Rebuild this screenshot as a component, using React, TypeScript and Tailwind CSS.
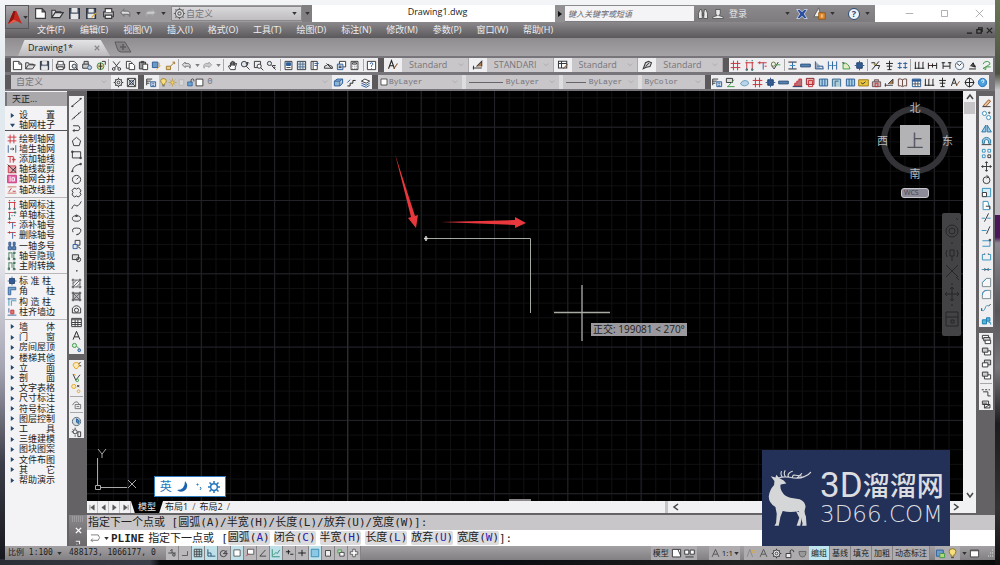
import type { ReactNode } from 'react';
import clsx from 'clsx';

// [path, stroke, fill]
type Shape = [string, string?, string?];

const K = '#3a3a3e';
const R = '#c8323c';
const B = '#2f5f9a';
const C = '#3a93bd';
const G = '#3f9a4a';
const Y = '#e3a92c';

const ring = (x: number, y: number, r: number) =>
  `M${x - r} ${y}a${r} ${r} 0 1 0 ${r * 2} 0a${r} ${r} 0 1 0 ${-r * 2} 0`;

const GLYPHS: Record<string, Shape[]> = {
  new: [['M2 2h8l4 4v8H2zM10 2v4h4', K, '#fff']],
  open: [['M1 13V4h4l1 2h6v2M1 13l4-6h10l-4 6z', K, '#ddd']],
  save: [['M2 2h12v12H2z', '#2b3442', '#4a5668'], ['M5 2h6v4H5zM4 9h8v5H4z', '#e8e8e8', '#e8e8e8']],
  saveas: [['M2 2h11v12H2z', '#2b3442', '#4a5668'], ['M5 3h5v3H5zM4 9h7v4H4z', '#e8e8e8', '#e8e8e8'], ['M8 13l6-6', Y]],
  print: [['M2 6h12v6H2z', K, '#bbb'], ['M4 6V2h8v4M4 10h8v4H4z', K, '#fff']],
  preview: [['M2 2h7l4 4v8H2z', K, '#fff'], [ring(9, 9, 3), K, '#d6e4ee'], ['M11 11l4 4', K]],
  plot: [['M1 6h9v6H1zM3 6V2h6v4', K, '#ccc'], [ring(11, 11, 3), '#4d6b8c', '#b9cfe0']],
  publish: [[ring(8, 9, 5), G, '#dcd58c'], ['M5 9h6M8 4v10M10 2h5v5', K]],
  cut: [['M3 2l8 10M13 2L5 12', K], [ring(4, 13, 2), K], [ring(12, 13, 2), K]],
  copy: [['M2 2h6l2 2v8H2z', K, '#fff'], ['M6 5h5l3 3v6H6z', K, '#fff']],
  paste: [['M2 3h9v10H2zM5 2h3v2H5z', K, '#999'], ['M7 6h7v8H7z', K, '#fff']],
  match: [['M2 3h8v8H2z', B, '#6c9ac4'], ['M8 14l6-6M12 4v5', Y]],
  block: [['M2 9h6v5H2zM8 9l5-5M11 3h3v3', '#a07a34', '#e6cd92']],
  undo: [['M6 3L2 7l4 4V9h5q2 0 2 3q2-6-3-7H6z', '#77777b', '#ddd']],
  redo: [['M10 3l4 4-4 4V9H5q-2 0-2 3q-2-6 3-7h4z', '#a5a5a8', '#ccc']],
  hand: [['M5 14L2 9l2-1 1 2V4h2v4V2h2v6V3h2v5l1-3h2l-2 6v3z', K, '#fff']],
  zoom: [[ring(6, 6, 4), K, '#dde6ee'], ['M9 9l5 5M11 3v5M9 5l2-2 2 2', K]],
  zoomwin: [['M2 2h9v9H2z', K], [ring(9, 9, 3), K, '#fff'], ['M11 11l4 4', K]],
  zoomprev: [[ring(5, 5, 3), K, '#dde6ee'], ['M8 8l6 6M14 8H9', K], [ring(12, 11, 1), K]],
  props: [['M3 2h10v12H3z', K, '#fff'], ['M5 4h6v4H5z', B, B], ['M5 11h6', K]],
  dc: [['M2 2h12v12H2z', K, '#d8e2ea'], ['M2 6h12M2 10h12M6 2v12M10 2v12', '#587490']],
  sheet: [['M3 2h9v12H3zM6 2v12', K, '#fff'], ['M8 5h6M8 8h4', B]],
  markup: [['M2 12q-1-4 3-4 2-4 5 0 4 0 4 4z', K, '#ddd'], ['M5 5l8 8', K]],
  pages: [['M5 2h9v8H5z', K, '#fff'], ['M2 6h8v8H2z', B, '#cfdcea'], ['M4 9h4M4 11h4', K]],
  calc: [['M3 2h10v12H3z', K, '#fff'], ['M5 4h6v2H5zM5 9h1M8 9h1M10 9h1M5 12h1M8 12h1M10 12h1', K]],
  help: [['M2 2h12v12H2z', K, '#fff'], ['M6 6q0-2 2-2t2 2q0 1-2 2v2M8 12v1', B]],
  textstyle: [['M2 13L6 2l4 11M4 9h4', '#222'], ['M9 13l5-7', '#8c5a32']],
  dimstyle: [['M1 12h12M2 9v5M6 10l7-7v7', K, '#ad7a4c']],
  tablestyle: [['M2 3h11v9H2zM2 6h11M6 3v9', K, '#fff'], ['M8 13l6-6', '#8c5a32']],
  mleader: [['M3 13l3-8 4-2 4 2-2 5-5 1z', K, '#ddd'], ['M6 10l5-5', K]],
  gear: [[ring(8, 8, 5), K, '#eee'], [ring(8, 8, 2), K], ['M8 1v2M8 13v2M1 8h2M13 8h2M3 3l1 1M12 12l1 1M13 3l-1 1M3 13l1-1', K]],
  gearbox: [['M2 2h12v12H2z', K, '#ddd'], [ring(8, 8, 3), '#4b6a8a', '#b7c9da'], ['M3 3l10 10M13 3L3 13', K]],
  layers: [['M2 6l5-3 7 3-5 3z', K, '#fff'], ['M2 9l7 3 5-3M2 12l7 3 5-3', B]],
  layerprops: [['M1 3h8M1 6h6M1 9h4M1 3v9', K], ['M7 7h7v7H7zM9 9h3M9 12h3', B, '#dce6f0']],
  bulb: [['M8 1q-5 0-5 4 0 3 3 5v2h4v-2q3-2 3-5 0-4-5-4z', '#8f7420', '#f6df7c'], ['M6 14h4', K]],
  sun: [[ring(8, 8, 3), '#b98b1c', '#f6d865'], ['M8 1v2M8 13v2M1 8h2M13 8h2M3 3l1 1M12 12l1 1M13 3l-1 1M3 13l1-1', '#b98b1c']],
  freeze: [['M4 3h8v10H4z', '#b4b4b6', '#d6d6d8']],
  lock: [['M3 7h8v7H3z', B, '#6ba3cf'], ['M9 7V3q3-3 5 0v3', K]],
  swatch: [['M2 2h12v12H2z', '#222', '#fff']],
  layercube: [['M2 6h8v7H2zM2 6l4-3h8l-4 3M10 13l4-4V3', B, '#8db5d3']],
  // axis, wall and column tools
  hash: [['M5 1v14M11 1v14M1 5h14M1 11h14', R]],
  gate: [['M4 3v11M12 3v11M2 4h12', R], ['M3 13h2v2H3zM11 13h2v2h-2zM3 1h2M11 1h2', '#2f6f6a']],
  gateone: [['M4 3v11M2 4h11', R], ['M3 13h2v2H3zM12 3h2v2h-2zM7 9h2M11 9h2', '#2f6f6a']],
  axisT: [['M1 4h13', R], ['M9 4v10', B], ['M4 2v4M11 9h3', R]],
  axisline: [['M1 4h9M5 4v10M10 4v10', R], ['M8 9h6M11 6v6', R]],
  axischeck: [['M2 8l4 5 6-10', K], [ring(5, 6, 3), '#6a7a3a'], ['M8 7h7', G]],
  axishide: [['M3 2v9M3 3h5v8M11 5v8', '#3e7a55'], ['M2 11h2v3H2zM10 12h3v2h-3zM10 2h3v2h-3z', '#2f5f4a']],
  axiscut: [['M2 3h12v11H2z', R, '#e8a7b0'], ['M1 1l14 13M6 14L14 5', '#222']],
  merge: [['M1 2h14v12H1z', '#c52e7d', '#e36aa5'], ['M5 4v8M8 6h4v5H8z', '#fff']],
  linetype: [['M1 3h14M1 13h14', '#c96a56'], ['M3 11l4-6M9 10h5', R]],
  wallI: [['M2 3h12M2 13h12', '#222'], ['M8 3v10', B], ['M4 8h8', C]],
  wall: [['M1 6h14v4H1z', '#2a4f7c', '#5783b0']],
  wallL: [['M2 2v11h12M5 9h8v4', B, '#9ab']],
  wallaxis: [['M2 2v12M14 2v12', B], ['M5 8h6M9 6l2 2-2 2', K]],
  mirrorwall: [['M2 2v12M8 2v12M14 2v12', B], ['M3 8h4M9 8h4', C]],
  arcfill: [['M3 13V4q8 0 10 9z', G, '#e4edc8'], ['M2 3l3 3', K]],
  column: [['M4 4h8v8H4z', '#23416b', '#335b93'], ['M8 1v14M1 8h14', '#335b93']],
  corner: [['M2 14V2h12v4H6v8z', B, '#74a5c9']],
  cross: [['M3 2v12M7 6h8M7 6v8', C], ['M1 3h14', B]],
  colalign: [['M3 2v7M1 13h14', B], ['M6 5h5v6H6z', R, '#d77a70']],
  figure: [['M3 14L13 2M2 4h5v4M9 8h5l-2 5', '#222'], ['M5 6h4', Y]],
  stick: [['M8 1v13M3 5h10M4 9h8M5 14h6', '#222']],
  dims: [['M2 3v10M7 3v10M13 3v10M1 12h14', '#222'], ['M2 3h1M7 3h1M13 3h1', R]],
  dimline: [['M2 4v9M14 4v9M2 8h12M8 5v6', '#222'], ['M5 8h1', R]],
  dimgap: [['M3 3v10M13 3v10M1 4h5M10 4h5M3 9h10', '#222']],
  clock: [[ring(8, 8, 6), '#4b6a8a', '#f4f7fa'], ['M4 5l4 3 3-3', K]],
  levels: [['M3 13h10M5 9l4-5 3 7M8 9h5', '#222', '#555']],
  loop: [['M3 6q1-4 6-4 5 1 4 4l-6 4h7M3 12l4-2v4z', G]],
  twin: [['M4 3v10M12 3v10M1 5h6M9 5h6M1 11h6M9 11h6', B, B]],
  twincol: [['M3 2h3v5H3zM10 2h3v5h-3zM2 9h5v5H2zM9 9h5v5H9z', '#2a4f86', '#5d8cc0']],
  house: [['M2 7h12v7H2zM5 7V4h6v3', '#6e5a5a', '#c6b3b3'], ['M6 9h4v5H6z', R]],
  stair: [['M2 13h12V3h-4v3H7v3H4v4', R, '#b96f74'], ['M1 14h14', '#1d3a66']],
  window: [['M2 3h12v10H2z', B, '#a9d0e0'], ['M6 3v10M10 3v10', B]],
  door: [['M2 14V3h12v11M6 14V6h5', '#37688c', '#aecbd8']],
  redbox: [['M2 2h11v9H2z', '#8b2631', '#e8b4b0'], ['M5 5h6v9H5z', R]],
  note: [['M1 4h14v9H1z', '#9b7a1c', '#eac53d'], ['M4 8l3 2 4-3', K]],
  table: [['M2 3h12v11H2z', B, '#fff'], ['M2 4h12v2H2z', B, B], ['M2 10h12M6 6v8M10 6v8', '#555']],
  plaintable: [['M1 2h14v12H1z', K, '#fff'], ['M1 4h14M1 8h14M1 11h14M6 4v10M10 4v10', K]],
  book: [['M2 3q3-1 6 1 3-2 6-1v10q-3-1-6 1-3-2-6-1zM8 4v9', '#6b4a42', '#eee']],
  sketch: [['M2 2h9v6H2z', K, '#dcdcdc'], ['M5 13L13 4M3 14h11', G]],
  cloud: [['M2 10q2-5 7-5t5 5q-6 6-12 0z', '#6f9ec0', '#b8d4e6']],
  steps: [['M2 13h4v-4h4V5h4', '#222'], ['M2 8l4-4', B]],
  north: [['M8 1v14M1 8h14', '#222'], [ring(8, 8, 6), '#222']],
  bluehelp: [[ring(8, 8, 6), '#2a73b8', '#4aa0dc'], ['M6 6q4-4 4 0L8 9', '#fff']],
  // draw tools
  line: [['M2 13L14 3', K], ['M1 13h2v1H1zM13 2h2v1h-2z', K]],
  xline: [['M1 14L15 2M5 12v-2M11 6V4', K]],
  pline: [['M3 4h8q4 4 0 7H3M3 11l2-2M3 11l2 2', K]],
  polygon: [['M8 2l6 5-2 7H4L2 7z', K]],
  rect: [['M2 4h12v9H2z', K], ['M1 3h2v2H1zM13 12h2v2h-2z', K]],
  arc: [['M2 14q0-9 12-11', K], ['M1 13h2v1H1zM13 2h2v2h-2z', K]],
  circle: [[ring(8, 8, 6), K], ['M8 8l3-3', K]],
  revcloud: [['M8 3q3-3 5 0 3 3 0 5 3 3 0 5-3 3-5 0-3 3-5 0-3-3 0-5-3-3 0-5 3-3 5 0z', K]],
  spline: [['M1 13q3-8 6-5t8-6', K]],
  ellipse: [['M2 8q0-4 6-4t6 4-6 4-6-4z', K], ['M7 3h2v2H7z', K]],
  earc: [['M3 9q-3-6 5-6t6 5-6 5l2-2', K]],
  insert: [['M6 2h7v7H6z', K], ['M3 8h6v6H3z', B, '#dce6ee'], ['M10 11l4 3', K]],
  makeblock: [['M2 4h9v7H2z', K, '#ddd'], [ring(11, 11, 3), K]],
  point: [['M8 8h1v1H8z', K]],
  hatch: [['M3 3h10v10H3zM3 8l5-5M3 13L13 3M8 13l5-5', '#66666a'], ['M1 3h2V1M13 1v2h2M1 13h2v2M15 13h-2v2', K]],
  gradient: [['M3 3h10v10H3z', K, '#b9b9bd'], ['M3 3l10 10M13 3L3 13', '#66666a'], ['M1 3h2V1M13 1v2h2M1 13h2v2M15 13h-2v2', K]],
  region: [['M2 13V6q6-7 12 0v7z', K], [ring(8, 9, 3), K]],
  mtext: [['M3 14L8 2l5 12M5 10h6', '#222']],
  addsel: [[ring(5, 5, 3), G, '#d6ecd6'], ['M8 6l4 4', G], [ring(12, 12, 2), B, '#a8c4e0']],
  bulbA: [['M8 2q-5 0-5 4l3 5h3l3-5q0-4-4-4z', Y, '#fbeab8'], ['M11 4l3-2M12 7h3', K]],
  bulbB: [['M3 3l4 9 6-8', K], [ring(9, 12, 2), G], ['M4 3l3 2', Y]],
  bulbC: [[ring(4, 5, 3), Y, '#fbeab8'], [ring(11, 12, 2), Y], ['M9 3l3 3M12 3L9 6', K]],
  isolate: [['M2 9q3-6 7-5l4 5M6 8h8v6H6zM8 11h4', '#77777b']],
  orb: [[ring(8, 8, 6), '#5d6c76', '#cfdce2'], ['M8 4l4 3-1 4-3-2z', B, C]],
  sunprops: [[ring(6, 7, 3), K], ['M6 1v2M1 7h2M2 3l1 1M10 7h4v7h-4zM6 12v2', K]],
  // modify tools
  erase: [['M3 13l8-9 3 2-7 8z', '#9a5d34', '#e6c29a'], ['M2 14h12', K]],
  copyobj: [[ring(5, 5, 3), C, '#fff'], [ring(11, 11, 3), C, '#fff'], [ring(12, 4, 1), K]],
  mirror: [['M7 3v10H1zM9 3v10h6z', '#2f7aa5', '#9bd0ea']],
  offset: [['M2 12h3V8q3-3 6 0v4h3V7q-6-7-12 0z', '#2f7aa5', '#9bd0ea'], ['M1 14h14', K]],
  array: [['M2 2h4v4H2zM10 2h4v4h-4zM2 10h4v4H2z', C, '#fff'], ['M10 10h4v4h-4z', K]],
  move: [['M8 1v14M1 8h14M6 3l2-2 2 2M6 13l2 2 2-2M3 6L1 8l2 2M13 6l2 2-2 2', K]],
  rotate: [[ring(8, 9, 5), K], ['M8 2l3 2-3 2', K]],
  scale: [['M2 2h12v12H2z', C, '#d3ecf6'], ['M2 8h6v6H2z', K, '#fff']],
  stretch: [['M3 2h7l3 12H3z', C, '#fff'], ['M7 9h6v4', K]],
  trim: [['M1 9h5M9 9h5', C], ['M5 14L11 2', K]],
  extend: [['M1 8h7', C], ['M8 13l5-11', K]],
  breakpt: [['M2 4h11v8H2', C], ['M12 2h2v2h-2z', K]],
  breakgap: [['M6 5H2v8h12V5h-4', C], ['M5 4h1M10 4h1', K]],
  join: [['M1 8h14', C], ['M5 6l2 2-2 2M11 6L9 8l2 2', K]],
  chamfer: [['M2 14V8l6-6h6v12z', '#7b8a92', '#f7f7f7'], ['M2 8l6-6', C]],
  fillet: [['M2 14V9q0-7 7-7h5v12z', '#7b8a92', '#f7f7f7'], ['M2 9q0-7 7-7', C]],
  blend: [['M1 11q3 4 5-2t5-3', C], ['M11 6l3-3M1 13V9', K]],
  explode: [['M2 7h6v6H2zM8 4h5v5H8z', '#1f7fb0', '#58b5da'], ['M11 11h3v3', C]],
  order1: [['M2 2h9v5H2z', K, '#fff'], ['M4 5h9v5H4z', K, '#ccc'], ['M6 9h8v5H6z', K, '#fff']],
  order2: [['M5 7h9v6H5z', K, '#fff'], ['M2 3h8v6H2z', K, '#ccc']],
  order3: [['M5 3h9v7H5z', K, '#ccc'], ['M2 7h8v6H2z', K, '#fff']],
  ordertxt: [['M1 4h3M6 4h3M11 4h2M3 7h7v6M10 13h4', K]],
  orderhatch: [['M2 3h9v5H2zM5 8h8v5H5zM5 13l8-5M3 6h6', K]],
  // status toggles
  infer: [['M8 2v6M2 8h12M5 5l3-3', K], [ring(11, 11, 2), K]],
  snap: [['M3 12h9V5', '#555']],
  grid: [['M2 2h12v12H2zM2 6h12M2 10h12M6 2v12M10 2v12', '#444']],
  ortho: [['M3 2v11h12M3 8h5v5', '#1d4f72']],
  polar: [[ring(7, 9, 5), K], ['M7 9l6-5M7 9h7', K]],
  osnap: [['M3 3h10v10H3z', '#555', '#fff']],
  osnap3: [['M4 2h10v8H4z', '#555', '#fff'], ['M2 13l4-4', R]],
  otrack: [['M3 13L12 3M3 13h10', K]],
  ducs: [['M2 2v12h12M4 11l4-4 2 2 4-6', '#2a8c6a']],
  dyn: [['M3 6h7M7 3v7M10 10h5', '#111']],
  lwt: [['M2 8h12M8 3v10', '#111']],
  tpy: [['M2 2h12v12H2z', '#3488b5', '#8cc8e4']],
  qp: [['M4 4h8v9H4z', K, '#eee']],
  sc: [['M3 3h6v5H3z', G, '#c8e0c0'], ['M6 7h7v6H6z', K, '#fff']],
  plus: [['M6 2h4v4h4v4h-4v4H6v-4H2V6h4z', '#555', '#fff']],
  paper: [['M2 2h12v11H2z', K, '#fff'], ['M10 2l4 9', K]],
  views: [['M1 3h6v6H1zM9 3h6v6H9zM2 13h12', K, '#fff']],
  person: [['M8 2L3 13M8 2l5 11M5 9h6', '#555', '#eee']],
  annoY: [['M7 2L3 13M7 2l4 11', '#888', '#fff'], ['M10 3l4 4M14 3l-4 4', Y]],
  unlock: [['M3 8h7v6H3z', K, '#eee'], ['M9 8V4q2-3 5 0v2', K]],
  bowl: [['M3 5h10q0 8-5 8T3 5z', '#666', '#999']],
  disk: [['M2 3h10v9H2z', '#2d5f9a', '#6d9ccb'], ['M7 8h7v6H7z', G, '#b6d67c']],
  screen: [['M2 3h12v10H2z', '#444', '#fff'], ['M2 4h12', '#444']],
};

function Glyph({ name, className = 'size-[11px]' }: { name: string; className?: string }) {
  return (
    <svg viewBox="0 0 16 16" className={clsx('shrink-0', className)} aria-hidden="true">
      {GLYPHS[name].map(([d, stroke, fill], i) => (
        <path key={i} d={d} stroke={stroke} fill={fill ?? 'none'} strokeWidth="1.4" />
      ))}
    </svg>
  );
}

const Caret = ({ className = '' }: { className?: string }) => (
  <svg viewBox="0 0 6 4" className={clsx('h-[3px] w-[5px] shrink-0', className)} aria-hidden="true">
    <path d="M0 0h6L3 4z" fill="#333" />
  </svg>
);

// '|' draws a divider, 'v' a narrow drop-down arrow
function IconRow({ items, className }: { items: string; className?: string }) {
  return (
    <div role="toolbar" className={clsx('flex items-center bg-[#efeef0]', className)}>
      {items.split(' ').map((n, i) => {
        if (n === '|') return <span key={i} className="mx-px h-3 w-px bg-[#a9a7aa]" />;
        if (n === 'v')
          return (
            <button key={i} aria-label="更多" className="flex w-2 justify-center">
              <Caret className="opacity-60" />
            </button>
          );
        return (
          <button key={i} aria-label={n} className="flex min-w-0 flex-1 justify-center">
            <Glyph name={n} />
          </button>
        );
      })}
    </div>
  );
}

function IconColumn({ items, className }: { items: string; className?: string }) {
  return (
    <div role="toolbar" className={clsx('flex basis-0 flex-col bg-[#efeef0]', className)}>
      {items.split(' ').map((n, i) =>
        n === '|' ? (
          <span key={i} className="mx-px my-[2px] h-px bg-[#a9a7aa]" />
        ) : (
          <button key={i} aria-label={n} className="flex min-h-0 flex-1 items-center justify-center">
            <Glyph name={n} />
          </button>
        ),
      )}
    </div>
  );
}

const Grip = () => <span className="w-[6px] shrink-0 self-stretch bg-[#5b595c]" />;

function Combo({ label, value, className, selectClass, children }: {
  label: string;
  value: string;
  className?: string;
  selectClass?: string;
  children?: ReactNode;
}) {
  return (
    <label className={clsx('flex min-w-0 basis-0 items-center self-stretch bg-[#c8c6c9] text-[#77757a]', className)}>
      {children}
      <select aria-label={label} className={clsx('min-w-0 flex-1 appearance-none bg-transparent leading-3 outline-none', selectClass)}>
        <option>{value}</option>
      </select>
      <svg viewBox="0 0 8 8" className="mx-1 size-[6px] shrink-0" aria-hidden="true">
        <path d="M1 2l3 3 3-3" fill="none" stroke="#a5a3a6" />
      </svg>
    </label>
  );
}

const MENUS = ['文件(F)', '编辑(E)', '视图(V)', '插入(I)', '格式(O)', '工具(T)', '绘图(D)', '标注(N)', '修改(M)', '参数(P)', '窗口(W)', '帮助(H)'];

function TitleBar() {
  return (
    <header className="relative flex h-[17px] shrink-0 bg-white pl-[23px]">
      <button
        aria-label="应用程序菜单"
        className="absolute top-0 left-0 z-10 flex h-6 w-6 items-center justify-center gap-px border border-[#59575a] bg-gradient-to-b from-[#a9a7aa] to-[#77757a]"
      >
        <svg viewBox="0 0 16 16" className="size-[15px]" aria-hidden="true">
          <path d="M7 1h3l6 14-5-3-10 3z" fill="#c2281f" />
          <path d="M7 1l-6 14 6-5 2-9z" fill="#8c140f" />
          <path d="M7 10l4 2-10 3z" fill="#e85b4c" />
        </svg>
        <Caret />
      </button>
      <div className="flex w-[284px] items-center bg-[#9c9a9d] pl-1">
        {['new', 'open', 'save', 'saveas', 'print', 'undo', 'v', 'redo', 'v'].map((n, i) =>
          n === 'v' ? (
            <button key={i} aria-label="更多" className="flex w-2 justify-center"><Caret /></button>
          ) : (
            <button key={i} aria-label={n} className="flex w-[17px] justify-center"><Glyph name={n} className="size-[13px]" /></button>
          ),
        )}
        <label className="ml-1 flex h-[15px] flex-1 items-center border border-[#8a888b] bg-gradient-to-b from-[#d9d8da] to-[#bfbdc0] px-px">
          <Glyph name="gear" className="size-[13px] opacity-70" />
          <select aria-label="工作空间" className="min-w-0 flex-1 appearance-none bg-transparent text-[9px] leading-3 text-[#77757a] outline-none">
            <option>自定义</option>
          </select>
          <Caret className="mr-[3px]" />
        </label>
        <button aria-label="自定义快速访问" className="flex h-full w-[10px] items-center justify-center bg-[#807e81]"><Caret /></button>
      </div>
      <h1 className="flex-1 pl-2 text-center text-[9px] leading-[14px] text-[#222]">Drawing1.dwg</h1>
      <div className="flex w-[320px] items-center bg-gradient-to-b from-[#8c8a8d] to-[#7d7b7e]">
        <button aria-label="展开" className="flex h-full w-[10px] items-center justify-center bg-[#929093]">
          <svg viewBox="0 0 4 6" className="h-[6px] w-1"><path d="M0 0l4 3-4 3z" fill="#111" /></svg>
        </button>
        <input
          aria-label="搜索"
          placeholder="键入关键字或短语"
          className="h-[15px] w-[129px] bg-[#f4f3f5] px-[3px] text-[8px] italic outline-none placeholder:text-[#66646a]"
        />
        <button aria-label="查找" className="ml-[3px] w-3">
          <svg viewBox="0 0 16 16" className="size-3" fill="#e9e9e9" stroke="#444"><path d="M2 14V7l2-5h2l1 5v7zM9 14V7l1-5h2l2 5v7zM7 7h2v3H7z" /></svg>
        </button>
        <button className="ml-[3px] flex items-center gap-[5px] text-[9px] leading-3 text-[#e8e7e9]">
          <svg viewBox="0 0 16 16" className="size-3" fill="#e9e9e9" stroke="#444"><path d="M5 2h6v6l-2 2 6 2v2H1v-2l6-2-2-2z" /></svg>
          登录
        </button>
        <span className="flex-1" />
        <Caret />
        <button aria-label="Exchange" className="ml-[6px]">
          <svg viewBox="0 0 16 16" className="size-3"><path d="M1 2h4l3 3 3-3h4l-4 6 4 6h-4l-3-3-3 3H1l4-6z" fill="#2c4f9e" stroke="#dfe4f0" /></svg>
        </button>
        <button aria-label="A360" className="ml-[5px] flex items-center gap-1">
          <svg viewBox="0 0 16 16" className="size-[13px]"><path d="M7 1L1 12h9z" fill="#eee" stroke="#555" /><path d="M7 7h8v8H7z" fill="#e08a2c" stroke="#8d5213" /><path d="M11 9v4" stroke="#fff" /></svg>
          <Caret />
        </button>
        <button aria-label="帮助" className="ml-[13px] flex size-3 items-center justify-center rounded-full border border-[#2b4a73] bg-[#eef3f8] text-[9px] leading-none font-bold text-[#2b4a73]">?</button>
        <Caret className="mx-[5px]" />
      </div>
      <div className="flex w-[120px] items-center justify-between pr-[11px] pl-[30px]">
        {['M1 6h10', 'M2 2h8v8H2z', 'M1 1l10 10M11 1L1 11'].map((d) => (
          <button key={d} aria-label={d === 'M1 6h10' ? '最小化' : d.includes('z') ? '最大化' : '关闭'}>
            <svg viewBox="0 0 12 12" className="size-[9px]"><path d={d} fill="none" stroke="#99979a" /></svg>
          </button>
        ))}
      </div>
    </header>
  );
}

function Toolbars() {
  return (
    <div className="flex shrink-0 flex-col gap-[3px] bg-[#77757a] pt-[2px] pb-[2px]">
      <div className="flex h-[14px] items-center pr-[2px] text-[9px]">
        <Grip />
        <IconRow
          className="h-full grow-[367] basis-0"
          items="new open save | print preview plot publish | cut copy paste match block | undo v redo v | hand zoom zoomwin zoomprev | props dc sheet markup pages calc | help"
        />
        <Grip />
        <div className="flex h-full grow-[339] basis-0 items-center bg-[#efeef0]">
          {[
            ['textstyle', '文字样式', 'Standard'],
            ['dimstyle', '标注样式', 'STANDARI'],
            ['tablestyle', '表格样式', 'Standard'],
            ['mleader', '多重引线样式', 'Standard'],
          ].map(([icon, label, value]) => (
            <div key={label} className="flex min-w-0 flex-1 items-center self-stretch border-r border-[#a9a7aa]">
              <button aria-label={label} className="flex w-[18px] shrink-0 justify-center"><Glyph name={icon} className="size-3" /></button>
              <Combo label={label} value={value} className="grow" selectClass="pl-[7px]" />
            </div>
          ))}
        </div>
        <Grip />
        <IconRow
          className="h-full grow-[264] basis-0"
          items="hash gate axisT axischeck | wallI wall wallL mirrorwall arcfill column | figure stick twin | dims dimline dimgap clock levels loop"
        />
      </div>
      <div className="flex h-[14px] items-center pr-[6px] text-[8px]">
        <Grip />
        <Combo label="工作空间" value="自定义" className="grow-[100]" selectClass="pl-[5px] text-[9px]" />
        <IconRow className="h-full w-[27px]" items="gear gearbox" />
        <Grip />
        <IconRow className="h-full w-[15px]" items="layerprops" />
        <Combo label="图层" value="0" className="grow-[172] font-[Liberation_Mono] text-[9px]" selectClass="pl-[3px]">
          <span className="flex">
            {['bulb', 'sun', 'freeze', 'lock', 'swatch'].map((n) => (
              <Glyph key={n} name={n} className="size-[9px]" />
            ))}
          </span>
        </Combo>
        <IconRow className="h-full w-10" items="layercube steps layers" />
        <Grip />
        <div className="flex h-full grow-[326] basis-0 gap-1 bg-[#dddcde] font-[Liberation_Mono]">
          <Combo label="颜色" value="ByLayer" className="grow-[83]" selectClass="pl-px">
            <Glyph name="swatch" className="ml-[2px] size-2" />
          </Combo>
          <Combo label="线型" value="ByLayer" className="grow-[92]" selectClass="pl-[3px]">
            <span className="ml-[3px] h-px w-[34px] bg-[#66646a]" />
          </Combo>
          <Combo label="线宽" value="ByLayer" className="grow-[75]" selectClass="pl-[3px]">
            <span className="ml-[3px] h-px w-5 bg-[#66646a]" />
          </Combo>
          <Combo label="打印样式" value="ByColor" className="grow-[62]" selectClass="pl-[2px]" />
        </div>
        <Grip />
        <IconRow
          className="h-full grow-[277] basis-0"
          items="layerprops sketch cloud hash column wall stair redbox window door window note house dimstyle book table dims stick textstyle north bluehelp"
        />
      </div>
    </div>
  );
}

const SIDEBAR: [string, string][][] = [
  [['right', '设置'], ['down', '轴网柱子']],
  [['hash', '绘制轴网'], ['wallaxis', '墙生轴网'], ['axisline', '添加轴线'], ['axiscut', '轴线裁剪'], ['merge', '轴网合并'], ['linetype', '轴改线型']],
  [['gate', '轴网标注'], ['gateone', '单轴标注'], ['axisT', '添补轴号'], ['axisT', '删除轴号'], ['twincol', '一轴多号'], ['axishide', '轴号隐现'], ['axishide', '主附转换']],
  [['column', '标准柱'], ['corner', '角柱'], ['cross', '构造柱'], ['colalign', '柱齐墙边']],
  ['墙体', '门窗', '房间屋顶', '楼梯其他', '立面', '剖面', '文字表格', '尺寸标注', '符号标注', '图层控制', '工具', '三维建模', '图块图案', '文件布图', '其它', '帮助演示'].map(
    (t): [string, string] => ['right', t],
  ),
];

function Sidebar() {
  return (
    <aside className="flex w-[62px] shrink-0 flex-col bg-[#f3f2f4]">
      <h2 className="mt-px h-[14px] shrink-0 border-l-2 border-[#77757a] bg-[#aaa8ab] pl-[5px] text-[9px] leading-[14px] text-[#222]">天正...</h2>
      <nav className="flex flex-1 flex-col pt-1 pb-[61px] font-[Liberation_Sans,Noto_Sans_CJK_SC,sans-serif]">
        {SIDEBAR.map((group, gi) => (
          <div key={gi} className="contents">
            {gi > 0 && <span className={clsx('h-px shrink-0', gi === 1 ? 'mb-[2px] bg-[#55535a]' : 'my-[2px]', gi > 1 && 'bg-[#b9b7ba]')} />}
            {group.map(([icon, text]) => (
              <button key={text} className="flex min-h-0 flex-1 items-center text-left text-[9px] leading-[10px] text-[#1c1c20]">
                <span className="flex w-[14px] justify-center">
                  {icon === 'right' || icon === 'down' ? (
                    <svg viewBox="0 0 6 6" className="size-[5px]"><path d={icon === 'right' ? 'M1 0l4 3-4 3z' : 'M0 1h6L3 5z'} fill="#23496e" /></svg>
                  ) : (
                    <Glyph name={icon} className="size-[10px]" />
                  )}
                </span>
                <span className={clsx('flex justify-between', text.length === 3 ? 'w-8' : 'w-9')}>
                  {text.length === 4 ? text : text.split('').map((ch) => <span key={ch}>{ch}</span>)}
                </span>
              </button>
            ))}
          </div>
        ))}
      </nav>
    </aside>
  );
}

function Drawing() {
  return (
    <div className="relative min-h-0 min-w-0 flex-1 overflow-hidden bg-black">
      <svg className="absolute inset-0 size-full" aria-label="绘图区">
        <defs>
          <pattern id="minor" x="40.5" y="35.7" width="14.66" height="14.66" patternUnits="userSpaceOnUse">
            <path d="M0 .5h15M.5 0v15" stroke="#101013" />
          </pattern>
          <pattern id="major" x="40.5" y="35.7" width="73.3" height="73.3" patternUnits="userSpaceOnUse">
            <path d="M0 .5h74M.5 0v74" stroke="#222228" />
          </pattern>
        </defs>
        <rect width="100%" height="100%" fill="url(#minor)" />
        <rect width="100%" height="100%" fill="url(#major)" />
        <path d="M260.5 0v410" stroke="#2c2c31" />
        {/* annotation arrows */}
        <path d="M308 63l16 63-3 1 8 10 2-13-3 1z" fill="#e8383d" />
        <path d="M354 131l74-2v-3l11 6-11 5v-3z" fill="#e8383d" />
        {/* polyline in progress and the crosshair */}
        <path d="M338 147.500h105.500V222" fill="none" stroke="#a4aaa2" />
        <path d="M337 147.500h4M339 145v5" stroke="#d5d8d2" strokeWidth="1.500" />
        <path d="M467 221.500h56M495 194v56" stroke="#a9aba5" strokeWidth="1.300" />
      </svg>
      <div className="absolute top-[232px] left-[504px] bg-[#9b999e] px-[2px] text-[10px] leading-[13px] text-[#222]">正交: 199081 &lt; 270°</div>

      {/* UCS axes */}
      <svg viewBox="0 0 50 50" className="absolute bottom-1 left-[4px] size-[50px]" fill="none" stroke="#a9a9a9">
        <path d="M6.500 11v27M9 40.500h27M4.500 38.500h5v4h-5zM7 2l4 5 4-5M11 7v4M37 33l8 8M45 33l-8 8" />
      </svg>
      <div className="absolute bottom-1 left-[67px] flex h-[21px] w-[72px] items-center justify-around border border-[#2f7cc0] bg-white px-[2px] text-[12px] leading-none text-[#2476bd]">
        <span>英</span>
        <svg viewBox="0 0 12 12" className="size-3"><path d="M8 0q5 6-1 10-4 2-7-1 8 0 8-9z" fill="#1c62b0" /></svg>
        <svg viewBox="0 0 8 8" className="size-[8px]"><path d="M2 1h1v1H2zM5 4q2 1 0 3" stroke="#2476bd" fill="none" /></svg>
        <svg viewBox="0 0 16 16" className="size-3" fill="none" stroke="#2476bd" strokeWidth="2"><circle cx="8" cy="8" r="4.500" /><path d="M8 0v3M8 13v3M0 8h3M13 8h3M2 2l3 3M11 11l3 3M14 2l-3 3M2 14l3-3" /></svg>
      </div>
      <span className="absolute bottom-0 left-1/2 h-[2px] w-[22px] -translate-x-4 bg-[#8a888b]" />

      {/* view cube */}
      <div className="absolute top-[9px] right-[8px] grid h-[80px] w-[80px] place-items-center text-[11px] leading-none text-[#b9b9bb]">
        <span className="absolute size-[68px] rounded-full border-[6px] border-[#343438]" />
        <button className="relative flex size-[30px] items-center justify-center bg-[#b3b3b5] text-[17px] text-[#55555a]">上</button>
        <span className="absolute top-[2px]">北</span>
        <span className="absolute bottom-px">南</span>
        <span className="absolute left-[2px]">西</span>
        <span className="absolute right-[2px]">东</span>
      </div>
      <button className="absolute top-[97px] right-[34px] h-[10px] w-7 rounded-[3px] border border-[#c9c8cf] bg-[#8d8b97] pl-[2px] text-left text-[7px] leading-[8px] text-[#44424c]">WCS</button>
      <div className="absolute top-[122px] right-[2px] flex h-[123px] w-[19px] flex-col items-center justify-around rounded-[2px] bg-[#434345] text-[#242426]">
        <svg viewBox="0 0 18 120" className="h-[120px] w-[18px]" fill="none" stroke="#262628">
          <circle cx="9" cy="16" r="6" /><circle cx="9" cy="16" r="3" /><path d="M8 28h2M8 69h2M8 90h2" />
          <path d="M4 35q-2 4 0 7M14 35q2 4 0 7M7 35h4v6H7zM9 41v5M3 50l12 12M15 50L3 62M13 62l3 3" />
          <path d="M9 72v14M2 79h14M7 74l2-2 2 2M7 84l2 2 2-2M4 77l-2 2 2 2M14 77l2 2-2 2M3 97h12v14H3zM3 102h12M8 105h3v3H8zM13 3l2 2" />
        </svg>
      </div>
    </div>
  );
}

function Chevron({ d }: { d: string }) {
  return (
    <svg viewBox="0 0 8 8" className="size-2"><path d={d} fill="none" stroke="#444" strokeWidth="1.500" /></svg>
  );
}

function Workspace() {
  return (
    <div className="flex min-h-0 flex-1">
      <div className="flex min-w-0 flex-1 flex-col">
        <div className="flex min-h-0 flex-1">
          <Drawing />
          <div className="flex w-[13px] shrink-0 flex-col items-center justify-between bg-[#f1f0f2] py-[2px]">
            <button aria-label="向上滚动"><Chevron d="M1 6l3-4 3 4" /></button>
            <span className="mt-px mb-auto h-3 w-[11px] bg-[#c6c4c7]" />
            <button aria-label="向下滚动"><Chevron d="M1 2l3 4 3-4" /></button>
          </div>
        </div>
        <div className="flex h-3 shrink-0 items-center bg-[#f1f0f2] text-[9px] leading-3 text-[#222]">
          {['M6 1v6L2 4zM1 1v6', 'M6 1v6L2 4z', 'M2 1v6l4-3z', 'M2 1v6l4-3zM7 1v6'].map((d, i) => (
            <button key={d} aria-label={['首个', '上一个', '下一个', '末个'][i]} className="flex h-full w-[11px] items-center justify-center border-r border-[#c4c2c5]">
              <svg viewBox="0 0 8 8" className="size-[7px]"><path d={d} fill="#555" stroke="#555" strokeWidth=".6" /></svg>
            </button>
          ))}
          <div role="tablist" className="flex h-full">
            <button role="tab" className="bg-black px-[7px] text-[#e8e8e8] [clip-path:polygon(0_0,100%_0,88%_100%,12%_100%)]">模型</button>
            <button role="tab" className="pr-1 pl-[2px]">布局1</button>
            <span className="text-[#666]">/</span>
            <button role="tab" className="px-1">布局2</button>
            <span className="text-[#666]">/</span>
          </div>
          <span className="flex-1" />
          <div className="flex h-full w-[311px] items-center justify-between border-l-[3px] border-[#c6c4c7] pr-4 pl-1">
            <button aria-label="向左滚动"><Chevron d="M6 1L2 4l4 3" /></button>
            <button aria-label="向右滚动"><Chevron d="M2 1l4 3-4 3" /></button>
          </div>
        </div>
      </div>
      <div className="flex w-[19px] shrink-0 flex-col bg-[#646265] pt-[5px] pr-[2px] pb-[103px] pl-[3px]">
        <IconColumn
          className="grow-[18]"
          items="erase copyobj mirror offset array move rotate scale stretch trim extend breakpt breakgap join chamfer fillet blend explode"
        />
        <span className="h-[6px] shrink-0" />
        <IconColumn className="grow-[6]" items="order1 order2 order3 order2 | ordertxt orderhatch" />
      </div>
    </div>
  );
}

const OPTIONS = [['圆弧', 'A'], ['闭合', 'C'], ['半宽', 'H'], ['长度', 'L'], ['放弃', 'U'], ['宽度', 'W']];

function CommandLine() {
  return (
    <section aria-label="命令行" className="flex shrink-0 border-t-2 border-[#646265] text-[11px] whitespace-nowrap">
      <div className="flex w-[18px] shrink-0 flex-col items-center justify-between bg-gradient-to-b from-[#8a888b] to-[#6a686b] py-px text-white">
        <svg viewBox="0 0 12 6" className="h-[6px] w-3"><path d="M0 1h12M0 3h12M0 5h12" stroke="#b3b1b4" strokeDasharray="1 1" /></svg>
        <button aria-label="关闭命令行"><svg viewBox="0 0 8 8" className="size-[7px]"><path d="M1 1l6 6M7 1L1 7" stroke="#fff" strokeWidth="1.600" /></svg></button>
        <button aria-label="选项"><svg viewBox="0 0 8 8" className="size-[6px]"><path d="M1 3h5v4M2 7h1" fill="none" stroke="#eee" strokeWidth="1.500" /></svg></button>
      </div>
      <div className="min-w-0 flex-1 font-[DejaVu_Sans_Mono,Noto_Sans_CJK_SC,monospace] leading-[15px] text-[#222]">
        <p className="bg-[#c8c6c9] pl-px">指定下一个点或 [圆弧(A)/半宽(H)/长度(L)/放弃(U)/宽度(W)]:</p>
        <div className="flex h-4 items-center bg-white pl-[2px]">
          <svg viewBox="0 0 14 10" className="h-[9px] w-[13px]"><path d="M2 1h8q3 3 0 6H2M2 7l2-2M2 7l2 2" fill="none" stroke="#777" /></svg>
          <Caret className="mx-[2px]" />
          <b>PLINE</b>
          <span className="ml-1">指定下一点或</span>
          <span className="ml-[7px]">[</span>
          {OPTIONS.map(([text, key], i) => (
            <button key={key} className={clsx('rounded-[2px] bg-[#dcdbdd] leading-[14px]', i > 0 && 'ml-1')}>
              {text}(<span className="text-[#2a22b8]">{key}</span>)
            </button>
          ))}
          <span>]:</span>
        </div>
      </div>
    </section>
  );
}

const TOGGLES = ['infer', 'snap', 'grid', 'ortho', 'polar', 'osnap', 'osnap3', 'otrack', 'ducs', 'dyn', 'lwt', 'tpy', 'qp', 'sc', 'plus'];
const ACTIVE = ['grid', 'ortho', 'osnap', 'ducs', 'tpy'];

function StatusBar() {
  return (
    <footer className="flex h-[14px] shrink-0 items-center bg-gradient-to-b from-[#a3a1a4] to-[#828083] pl-[3px] text-[8px] leading-3 whitespace-nowrap text-[#1d1d20]">
      <button className="flex w-[61px] items-center gap-1">
        <span className="font-[DejaVu_Sans_Mono,Noto_Sans_CJK_SC,monospace]">比例 1:100</span>
        <Caret />
      </button>
      <span className="w-[97px] font-[DejaVu_Sans_Mono]">488173, 1066177, 0</span>
      <div className="flex h-full">
        {TOGGLES.map((n) => (
          <button key={n} aria-label={n} className={clsx('flex h-full w-[13px] items-center justify-center border-r border-[#858386]', ACTIVE.includes(n) ? 'bg-[#bfdfe9]' : 'bg-[#bab8bb]')}>
            <Glyph name={n} className="size-[10px]" />
          </button>
        ))}
      </div>
      <span className="flex-1" />
      <div className="flex h-full items-center bg-[#aeacaf]">
        <button className="w-5">模型</button>
        <button aria-label="图纸" className="w-[13px]"><Glyph name="paper" /></button>
        <button aria-label="快速查看" className="w-[13px]"><Glyph name="views" /></button>
      </div>
      <button className="ml-3 flex h-full items-center gap-px bg-[#aeacaf] px-px">
        <Glyph name="person" />1:1<Caret />
      </button>
      <div className="ml-1 flex h-full items-center bg-[#aeacaf]">
        {['annoY', 'person', 'gear', 'unlock', 'bowl'].map((n) => (
          <button key={n} aria-label={n} className="flex w-[13px] justify-center"><Glyph name={n} /></button>
        ))}
        {['编组', '基线', '填充', '加粗', '动态标注'].map((t, i) => (
          <button key={t} className={clsx('h-full border-r border-[#858386] px-[2px]', i === 0 && 'bg-[#bfe6f0]')}>{t}</button>
        ))}
      </div>
      <div className="ml-[5px] flex h-full items-center gap-px bg-[#aeacaf] pr-[2px]">
        <Glyph name="disk" />
        <Glyph name="bulb" />
      </div>
      <Caret className="mx-[2px]" />
      <button aria-label="全屏显示"><Glyph name="screen" /></button>
      <svg viewBox="0 0 8 8" className="mr-px ml-[6px] size-2"><path d="M6 1h1M4 4h1M6 4h1M2 7h1M4 7h1M6 7h1" stroke="#ddd" /></svg>
    </footer>
  );
}

function Watermark() {
  return (
    <div className="absolute right-[50px] bottom-[19px] flex h-24 w-[188px] items-center bg-[#233057] text-[#dcdde0]">
      <svg viewBox="24 60 132 172" className="ml-[6px] h-[57px] w-11 shrink-0" aria-hidden="true">
        <path
          d="M32 79l14 4 3-9 8 10 14 8 8 9-17 3q-3 9 3 20 8 15 26 20l28 4q16 6 18 22l-3 14q0 8 4 16l2 28h-14l2-6-6-26-6-12q-24 6-48 0l-7 18-5 26H43l5-8 2-28-4-20q-21-13-20-33 2-19 16-34l1-12z"
          fill="#d5d6d8"
        />
        <path d="M108 184l18 6-1 16-4 22h-11l8-24z" fill="#d5d6d8" />
        <path
          d="M55 84q15-5 34-2 28 6 44-2 13-4 19-13M66 80q-5-7-2-15M76 80q-6-8-1-18M85 81q-4-11 12-17M112 84l13-13M99 84q-4-6 3-9 10 2 22 3"
          fill="none"
          stroke="#d5d6d8"
          strokeWidth="3.500"
          strokeLinecap="round"
        />
      </svg>
      <div className="flex flex-col pl-[8px] whitespace-nowrap">
        <span className="flex items-center text-[27px] leading-8 font-medium">
          <span className="font-[Roboto] text-[35px] font-normal">3D</span>溜溜网
        </span>
        <span className="font-[DejaVu_Sans] text-[23px] leading-6 font-extralight">3D66.COM</span>
      </div>
    </div>
  );
}

export default function App() {
  return (
    <div className="relative flex h-screen flex-col overflow-hidden bg-[linear-gradient(to_bottom,#f3f5f7,#dfe9ee_15%,#e9e9ef_45%,#a5a4b3_65%,#3b3d48_82%,#15161c)] px-[5px] pt-[5px] pb-[5px] font-[Open_Sans,Noto_Sans_CJK_SC,sans-serif]">
      {/* desktop visible around the window */}
      <div className="absolute inset-x-0 bottom-0 h-[6px] bg-[linear-gradient(to_right,#2b2d36,#3b3d48_15%,#0a0a0c_16%,#0c0d12_50%,#222_75%,#0a0a0a)]" />
      <div className="absolute inset-y-0 right-0 w-[5px] bg-[linear-gradient(to_bottom,#6b7457,#4c5242_13%,#c9c9cc_16%,#b7b6ba_38%,#4a1858_38%,#4a1858_42%,#8b8a90_43%,#55555a_55%,#77767a_65%,#1c1c1e_75%,#333_90%,#111)]" />
      <div className="relative flex min-h-0 flex-1 flex-col">
        <TitleBar />
        <nav className="flex h-4 shrink-0 items-center gap-[15px] bg-gradient-to-b from-[#8b898c] to-[#5b595c] pr-[2px] pl-8 text-[9px] leading-4 text-[#f0eff1]">
          {MENUS.map((m) => (
            <button key={m}>{m}</button>
          ))}
          <span className="ml-auto flex items-center gap-[3px]">
            {['M1 7h6', 'M1 3h5v4H1zM3 3V1h4v4H6', 'M1 1l6 6M7 1L1 7'].map((d, i) => (
              <button key={d} aria-label={['最小化图形', '还原图形', '关闭图形'][i]}>
                <svg viewBox="0 0 8 8" className="size-[7px]"><path d={d} fill="none" stroke="#222" strokeWidth="1.500" /></svg>
              </button>
            ))}
          </span>
        </nav>
        <div className="flex h-[18px] shrink-0 items-end bg-gradient-to-b from-[#8f8d90] to-[#a5a3a6] pl-[13px]">
          <div className="flex h-4 w-[92px] items-center justify-between bg-gradient-to-b from-[#e4e3e5] to-[#bcbabd] pr-[10px] pl-[10px] text-[9px] leading-4 text-[#222] [clip-path:polygon(7%_0,90%_0,100%_100%,0_100%)]">
            Drawing1*
            <button aria-label="关闭" className="text-[#888]">
              <svg viewBox="0 0 8 8" className="size-[6px]"><path d="M1 1l6 6M7 1L1 7" stroke="#88868a" strokeWidth="1.500" /></svg>
            </button>
          </div>
          <button aria-label="新建图形" className="ml-1 flex h-full items-center">
            <svg viewBox="0 0 18 12" className="h-3 w-[18px]"><path d="M1 1h10l6 10H7q-3 0-4-4z" fill="#858386" stroke="#5e5c5f" /><path d="M9 3v6M6 6h6" stroke="#5e5c5f" strokeWidth="1.500" /></svg>
          </button>
        </div>
        <Toolbars />
        <div className="flex min-h-0 flex-1 bg-[#646265]">
          <Sidebar />
          <div className="flex min-w-0 flex-1 flex-col pl-[2px]">
            <div className="flex min-h-0 flex-1">
              <div className="flex w-[18px] shrink-0 flex-col pt-[5px] pr-[3px] pb-[75px]">
                <IconColumn
                  className="grow-[20]"
                  items="line xline pline polygon rect arc circle revcloud spline ellipse earc insert makeblock point hatch gradient region plaintable mtext addsel"
                />
                <span className="h-[6px] shrink-0" />
                <IconColumn className="grow-[6]" items="bulbA bulbB bulbC | isolate | orb sunprops" />
              </div>
              <Workspace />
            </div>
            <CommandLine />
          </div>
        </div>
        <StatusBar />
      </div>
      <Watermark />
    </div>
  );
}
